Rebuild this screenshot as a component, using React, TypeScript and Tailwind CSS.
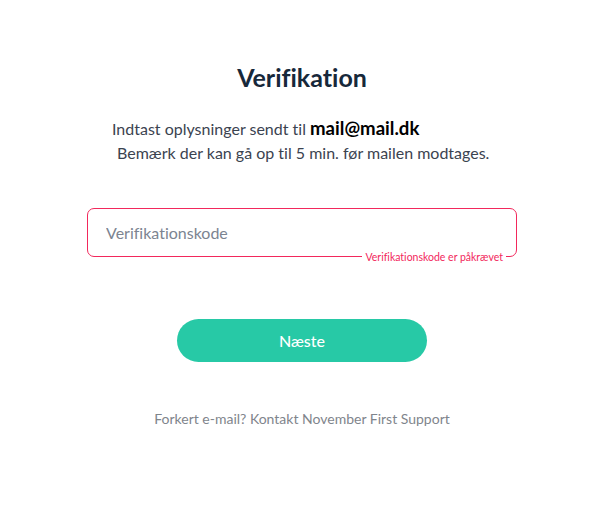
export default function App() {
  return (
    <div className="min-h-[514px] w-[600px] bg-white font-['Lato','Liberation_Sans',sans-serif] [font-variant-ligatures:none]">
      <div className="flex flex-col items-center pl-[4px] pt-[61px]">
        <h1 className="text-[25px] leading-[32px] font-bold text-[#17283a]">Verifikation</h1>

        <div className="mt-[23px] w-full pl-[108px] text-[16px] text-[#3b4350]">
          <p className="leading-[24px]">
            Indtast oplysninger sendt til{' '}
            <span className="text-[18.6px] font-bold text-black">mail@mail.dk</span>
          </p>
          <p className="leading-[24px] pl-[5px]">Bemærk der kan gå op til 5 min. før mailen modtages.</p>
        </div>

        <div className="relative mt-[43px] w-[430px]">
          <input
            className="h-[49px] w-full rounded-[7px] border border-[#f2285c] px-[18px] text-[16px] text-[#333] outline-none placeholder:text-[#7c8491]"
            placeholder="Verifikationskode"
          />
          <span className="absolute right-[11px] top-[43px] bg-white px-[3px] text-[10.5px] leading-[12px] text-[#f2285c]">
            Verifikationskode er påkrævet
          </span>
        </div>

        <button className="mt-[62px] h-[43px] w-[250px] rounded-full bg-[#27c9a6] text-[16px] font-medium text-white">
          Næste
        </button>

        <p className="mt-[46px] text-[14px] text-[#7f858c]">Forkert e-mail? Kontakt November First Support</p>
      </div>
    </div>
  );
}
